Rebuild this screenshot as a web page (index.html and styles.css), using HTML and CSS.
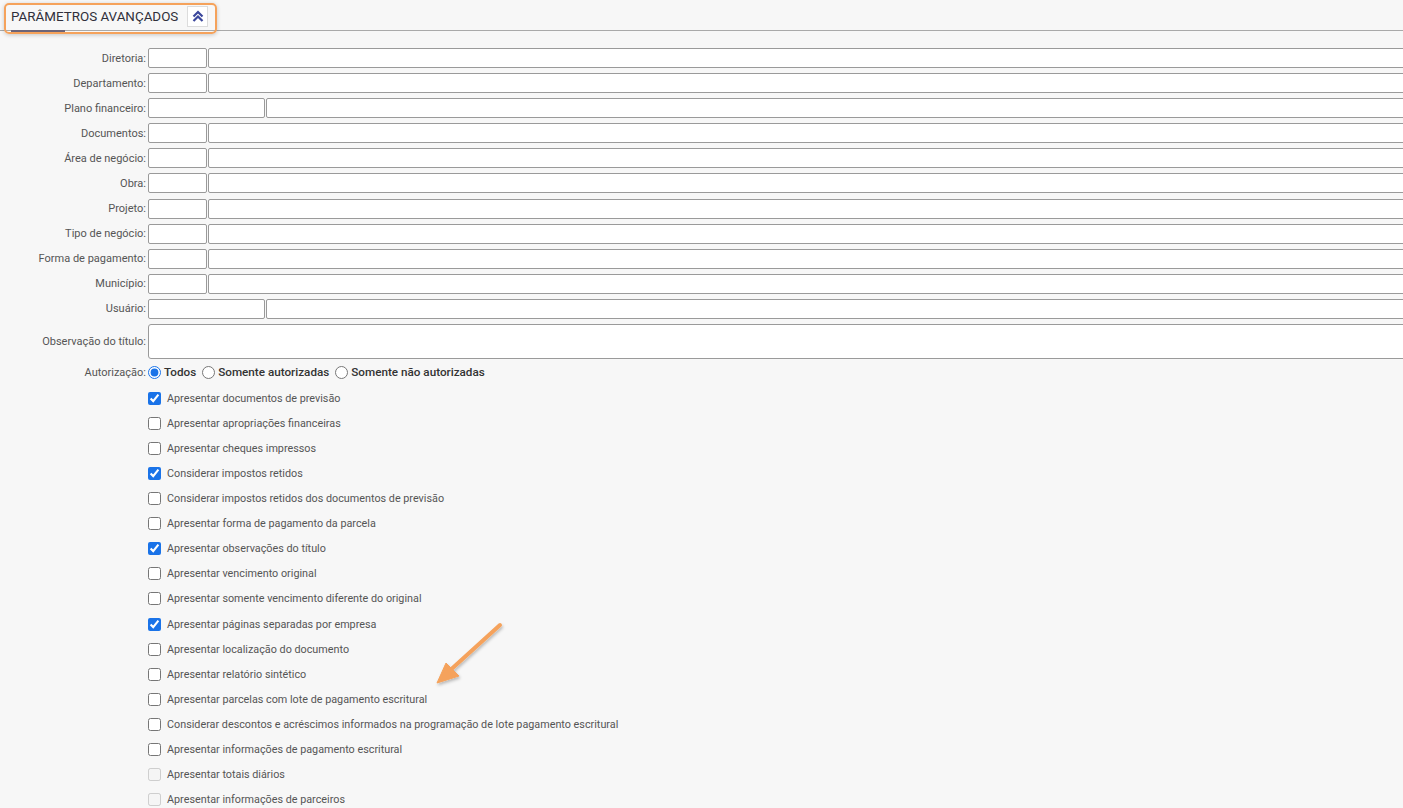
FILE: index.html
```html
<!DOCTYPE html>
<html lang="pt-BR">
<head>
    <meta charset="UTF-8">
    <meta name="viewport" content="width=device-width, initial-scale=1.0">
    <title>Parâmetros avançados</title>
    <link rel="stylesheet" href="styles.css">
</head>
<body>
    <div class="section-header">
        <span class="section-title">PARÂMETROS AVANÇADOS</span>
        <button class="collapse-btn" title="Recolher">
            <svg width="12" height="12" viewBox="0 0 12 12">
                <path d="M1.5 6.5 L6 2 L10.5 6.5" fill="none" stroke="#3b479c" stroke-width="2.2"/>
                <path d="M1.5 11 L6 6.5 L10.5 11" fill="none" stroke="#3b479c" stroke-width="2.2"/>
            </svg>
        </button>
        <div class="highlight"></div>
    </div>

    <div class="form">
        <div class="row"><label>Diretoria:</label><input class="code"><input class="desc"></div>
        <div class="row"><label>Departamento:</label><input class="code"><input class="desc"></div>
        <div class="row"><label>Plano financeiro:</label><input class="code wide"><input class="desc"></div>
        <div class="row"><label>Documentos:</label><input class="code"><input class="desc"></div>
        <div class="row"><label>Área de negócio:</label><input class="code"><input class="desc"></div>
        <div class="row"><label>Obra:</label><input class="code"><input class="desc"></div>
        <div class="row"><label>Projeto:</label><input class="code"><input class="desc"></div>
        <div class="row"><label>Tipo de negócio:</label><input class="code"><input class="desc"></div>
        <div class="row"><label>Forma de pagamento:</label><input class="code"><input class="desc"></div>
        <div class="row"><label>Município:</label><input class="code"><input class="desc"></div>
        <div class="row"><label>Usuário:</label><input class="code wide"><input class="desc"></div>
        <div class="row"><label>Observação do título:</label><textarea class="obs"></textarea></div>

        <div class="row radios">
            <label>Autorização:</label>
            <span class="radio"><input type="radio" name="aut" checked> Todos</span>
            <span class="radio"><input type="radio" name="aut"> Somente autorizadas</span>
            <span class="radio"><input type="radio" name="aut"> Somente não autorizadas</span>
        </div>

        <div class="checks">
            <label class="check"><input type="checkbox" checked> Apresentar documentos de previsão</label>
            <label class="check"><input type="checkbox"> Apresentar apropriações financeiras</label>
            <label class="check"><input type="checkbox"> Apresentar cheques impressos</label>
            <label class="check"><input type="checkbox" checked> Considerar impostos retidos</label>
            <label class="check"><input type="checkbox"> Considerar impostos retidos dos documentos de previsão</label>
            <label class="check"><input type="checkbox"> Apresentar forma de pagamento da parcela</label>
            <label class="check"><input type="checkbox" checked> Apresentar observações do título</label>
            <label class="check"><input type="checkbox"> Apresentar vencimento original</label>
            <label class="check"><input type="checkbox"> Apresentar somente vencimento diferente do original</label>
            <label class="check"><input type="checkbox" checked> Apresentar páginas separadas por empresa</label>
            <label class="check"><input type="checkbox"> Apresentar localização do documento</label>
            <label class="check"><input type="checkbox"> Apresentar relatório sintético</label>
            <label class="check"><input type="checkbox"> Apresentar parcelas com lote de pagamento escritural</label>
            <label class="check"><input type="checkbox"> Considerar descontos e acréscimos informados na programação de lote pagamento escritural</label>
            <label class="check"><input type="checkbox"> Apresentar informações de pagamento escritural</label>
            <label class="check disabled"><input type="checkbox" disabled> Apresentar totais diários</label>
            <label class="check disabled"><input type="checkbox" disabled> Apresentar informações de parceiros</label>
        </div>
    </div>

    <!-- seta de destaque -->
    <svg class="arrow" width="90" height="80" viewBox="0 0 90 80">
        <defs>
            <filter id="sh" x="-20%" y="-20%" width="140%" height="140%">
                <feDropShadow dx="1" dy="2" stdDeviation="1.5" flood-color="#000" flood-opacity="0.25"/>
            </filter>
        </defs>
        <g filter="url(#sh)" fill="#f5a25b" stroke="#f5a25b">
            <line x1="78" y1="6" x2="24" y2="55" stroke-width="4" stroke-linecap="round"/>
            <polygon points="15,64 24,44 37,57" stroke-width="1"/>
        </g>
    </svg>
</body>
</html>
```

FILE: styles.css
```css
body {
    margin: 0;
    background-color: #f7f7f7;
    font-family: Roboto, 'Liberation Sans', sans-serif;
    color: #555;
    overflow: hidden;
}

.section-header {
    position: relative;
    display: flex;
    align-items: center;
    height: 31px;
    padding-left: 11px;
    padding-top: 2px;
    box-sizing: border-box;
    border-bottom: 1px solid #a9a9a9;
}

.section-title {
    position: relative;
    font-size: 13.4px;
    color: #2f2f3a;
    line-height: 29px;
}

.section-title::after {
    content: '';
    position: absolute;
    left: 0;
    bottom: -1px;
    width: 54px;
    height: 2px;
    background-color: #6c6478;
}

.collapse-btn {
    width: 21px;
    height: 21px;
    margin-left: 9px;
    padding: 0;
    border: 1px solid #dcdcdc;
    background-color: #fff;
    display: flex;
    align-items: center;
    justify-content: center;
}

.highlight {
    position: absolute;
    left: 4px;
    top: 3px;
    width: 209px;
    height: 27px;
    border: 2px solid #f5a25b;
    border-radius: 5px;
    box-shadow: 0 1px 4px rgba(0, 0, 0, 0.2);
}

.form {
    padding-top: 17px;
}

.row {
    display: flex;
    align-items: center;
    margin-bottom: 5.1px;
    width: calc(100% + 20px);
}

.row label {
    width: 148px;
    flex-shrink: 0;
    text-align: right;
    font-size: 11px;
    padding-right: 2px;
    box-sizing: border-box;
}

.row input {
    height: 20px;
    box-sizing: border-box;
    border: 1px solid #9a9a9a;
    border-radius: 2px;
    background-color: #fff;
    margin: 0 1px 0 0;
    padding: 0 4px;
}

.row input.code {
    width: 59px;
}

.row input.code.wide {
    width: 117px;
}

.row input.desc {
    flex: 1;
}

.row textarea.obs {
    flex: 1;
    height: 35px;
    box-sizing: border-box;
    border: 1px solid #9a9a9a;
    border-radius: 3px;
    background-color: #fff;
    margin: 0;
    resize: none;
}

.row.radios {
    margin-top: 3.5px;
    margin-bottom: 0;
    height: 16px;
}

.radio {
    display: flex;
    align-items: center;
    font-size: 11.7px;
    font-weight: 500;
    color: #333;
    margin-right: 6px;
}

.radio input[type="radio"] {
    width: 13px;
    height: 13px;
    margin: 0 3px 0 0;
    border: none;
    padding: 0;
    accent-color: #1a73e8;
}

.checks {
    display: flex;
    flex-direction: column;
    padding-left: 148px;
    padding-top: 5.5px;
}

.check {
    display: flex;
    align-items: center;
    height: 25.1px;
    font-size: 10.8px;
    color: #555;
}

.check input {
    width: 13px;
    height: 13px;
    margin: 0 6px 0 0;
    accent-color: #1a73e8;
}

.arrow {
    position: absolute;
    left: 422px;
    top: 619px;
}
```
